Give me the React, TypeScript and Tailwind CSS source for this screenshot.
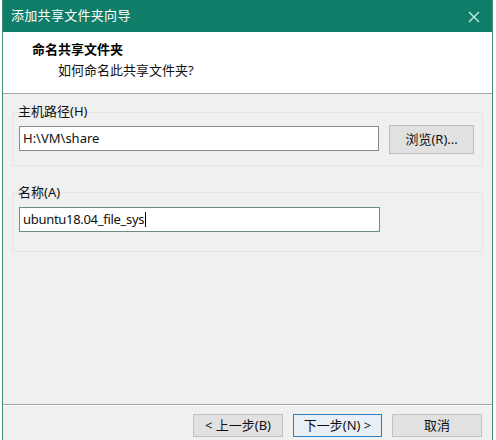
import React from "react";

const font = `"Noto Sans", "Noto Sans CJK SC", sans-serif`;

function WinButton({ label, focused }: { label: string; focused?: boolean }) {
  return (
    <div
      className={
        "h-[23px] flex items-center justify-center text-[13px] text-[#111] " +
        (focused
          ? "border border-[#2a7fc6] bg-[#e8eff6] w-[89px]"
          : "border border-[#c2c2c2] bg-[#e1e1e1] w-[90px]")
      }
    >
      {label}
    </div>
  );
}

export default function App() {
  return (
    <div className="w-[496px] h-[440px] bg-white overflow-hidden flex" style={{ fontFamily: font }}>
      <div className="ml-[2px] w-[491px] h-full border-x border-[#3d8f80] flex flex-col">
        {/* title bar */}
        <div className="h-[32px] bg-[#0f7d68] flex items-center justify-between pl-[8px] pr-[12px] shrink-0">
          <span className="text-[13px] text-white tracking-[0.3px]">添加共享文件夹向导</span>
          <svg width="12" height="12" viewBox="0 0 12 12" className="mt-[1px]">
            <path d="M1 1 L11 11 M11 1 L1 11" stroke="#c9f1e6" strokeWidth="1.3" />
          </svg>
        </div>

        {/* header */}
        <div className="h-[62px] bg-white border-b border-[#a7a7a7] shrink-0 pt-[8px]">
          <div className="pl-[29px] text-[13px] font-bold text-black leading-[18px]">命名共享文件夹</div>
          <div className="pl-[55px] mt-[3px] text-[13px] text-[#111] leading-[18px]">如何命名此共享文件夹?</div>
        </div>

        {/* body */}
        <div className="flex-1 bg-[#f0f0f0] px-[9px] pt-[9px] flex flex-col">
          <div className="pl-[6px] text-[13px] text-[#111] leading-[16px] relative z-10">主机路径(H)</div>
          <div className="-mt-[7px] border border-[#e4e4e4] h-[54px] pl-[6px] pr-[8px] flex items-start gap-[10px] pt-[13px]">
            <div className="w-[361px] h-[25px] bg-white border border-[#8a8a8a] flex items-center pl-[3px] text-[13px] text-[#111]">
              H:\VM\share
            </div>
            <div className="w-[85px] h-[29px] -mt-[1px] bg-[#e1e1e1] border border-[#bdbdbd] flex items-center justify-center text-[13px] text-[#111]">
              浏览(R)...
            </div>
          </div>

          <div className="mt-[18px] pl-[6px] text-[13px] text-[#111] leading-[16px] relative z-10">名称(A)</div>
          <div className="-mt-[8px] border border-[#e4e4e4] h-[60px] pl-[6px] pt-[14px]">
            <div className="w-[361px] h-[25px] bg-white border border-[#6f8984] flex items-center pl-[3px] text-[13px] tracking-[-0.3px] text-[#111]">
              ubuntu18.04_file_sys
              <span className="inline-block w-[1px] h-[15px] bg-black ml-[1px]" />
            </div>
          </div>
        </div>

        {/* footer */}
        <div className="h-[36px] bg-[#f0f0f0] border-t border-[#a9a9a9] shadow-[inset_0_1px_0_#ffffff] shrink-0 flex items-start justify-end gap-[10px] pt-[9px] pr-[10px]">
          <WinButton label="< 上一步(B)" />
          <WinButton label="下一步(N) >" focused />
          <WinButton label="取消" />
        </div>
      </div>
    </div>
  );
}
